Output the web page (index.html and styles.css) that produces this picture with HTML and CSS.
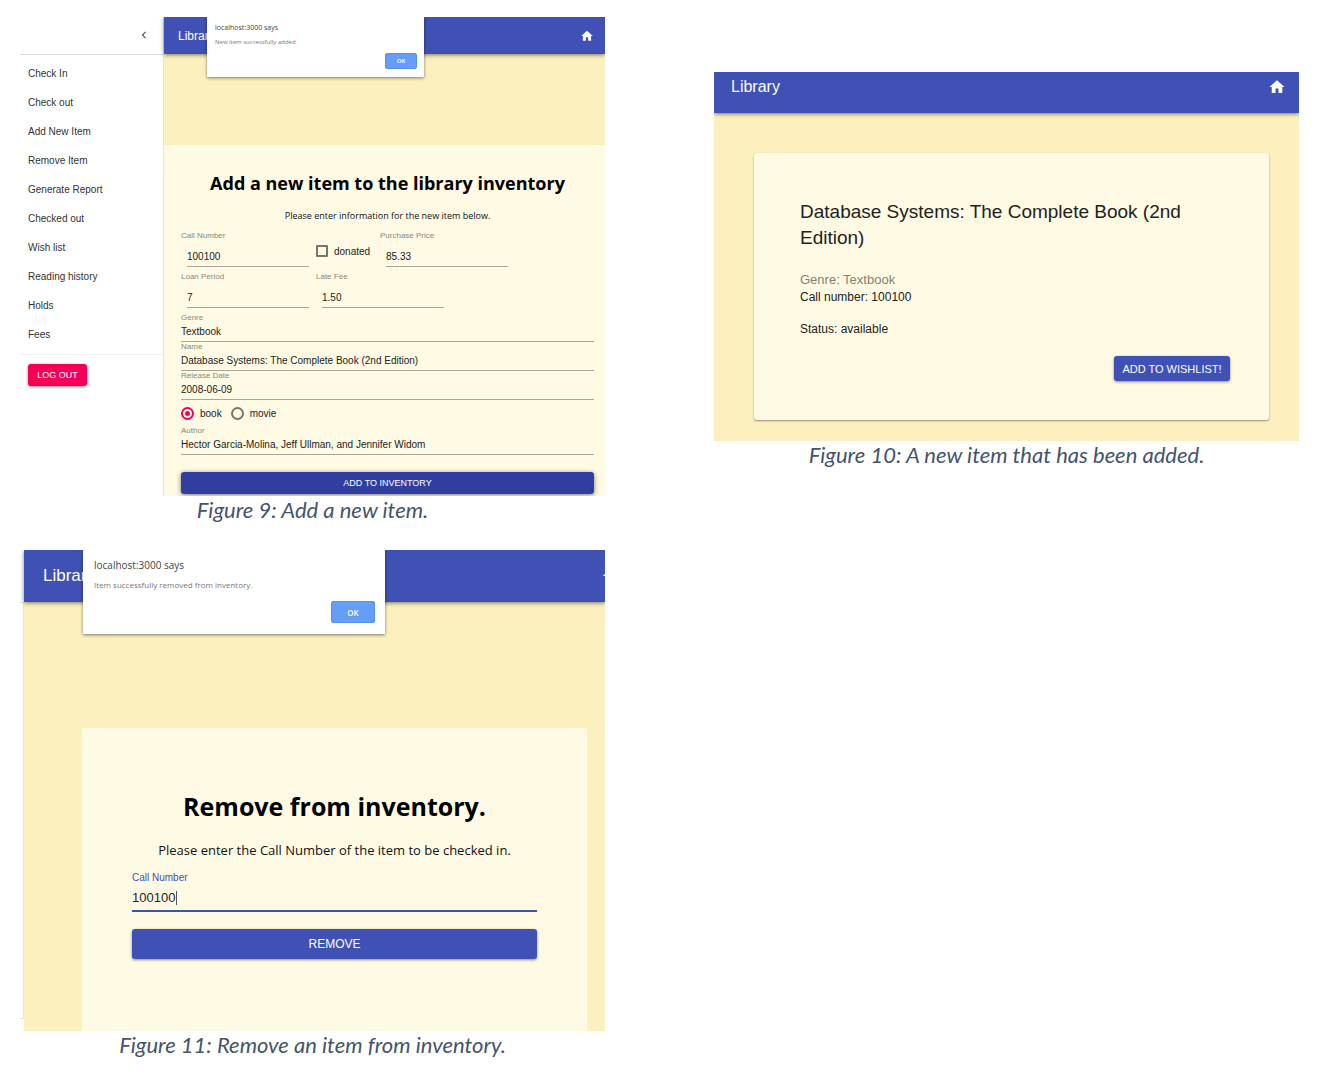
FILE: index.html
```html
<!DOCTYPE html>
<html lang="en">
<head>
<meta charset="utf-8">
<meta name="viewport" content="width=device-width, initial-scale=1">
<title>Library inventory figures</title>
<link rel="stylesheet" href="styles.css">
</head>
<body>
<svg class="sprite" aria-hidden="true">
  <symbol id="home" viewBox="0 0 24 24"><path d="M10 20v-6h4v6h5v-8h3L12 3 2 12h3v8z"/></symbol>
  <symbol id="chevron" viewBox="0 0 24 24"><path d="M15.41 7.41L14 6l-6 6 6 6 1.410-1.410L10.830 12z"/></symbol>
</svg>
<main class="figures">

  <figure class="figure">
    <div class="screen screen-add">
      <aside class="drawer">
        <div class="drawer-head">
          <button class="icon-button" type="button" aria-label="Close menu"><svg class="icon icon-small"><use href="#chevron"/></svg></button>
        </div>
        <nav>
          <ul class="menu">
            <li><a href="#">Check In</a></li>
            <li><a href="#">Check out</a></li>
            <li><a href="#">Add New Item</a></li>
            <li><a href="#">Remove Item</a></li>
            <li><a href="#">Generate Report</a></li>
            <li><a href="#">Checked out</a></li>
            <li><a href="#">Wish list</a></li>
            <li><a href="#">Reading history</a></li>
            <li><a href="#">Holds</a></li>
            <li><a href="#">Fees</a></li>
          </ul>
        </nav>
        <div class="drawer-foot"><button class="button button-logout" type="button">LOG OUT</button></div>
      </aside>
      <div class="app">
        <header class="bar">
          <span class="brand">Library</span>
          <a class="home" href="#" aria-label="Home"><svg class="icon icon-small"><use href="#home"/></svg></a>
        </header>
        <section class="panel">
          <h2 class="heading">Add a new item to the library inventory</h2>
          <p class="lead">Please enter information for the new item below.</p>
          <form class="form">
            <div class="row">
              <div class="field field-short"><label for="call">Call Number</label><input id="call" type="text" value="100100"></div>
              <label class="check"><input type="checkbox">donated</label>
              <div class="field field-short"><label for="price">Purchase Price</label><input id="price" type="text" value="85.33"></div>
            </div>
            <div class="row">
              <div class="field field-short"><label for="loan">Loan Period</label><input id="loan" type="text" value="7"></div>
              <div class="field field-short"><label for="fee">Late Fee</label><input id="fee" type="text" value="1.50"></div>
            </div>
            <div class="field"><label for="genre">Genre</label><input id="genre" type="text" value="Textbook"></div>
            <div class="field"><label for="name">Name</label><input id="name" type="text" value="Database Systems: The Complete Book (2nd Edition)"></div>
            <div class="field"><label for="date">Release Date</label><input id="date" type="text" value="2008-06-09"></div>
            <div class="radios">
              <label><input type="radio" name="kind" checked>book</label>
              <label><input type="radio" name="kind">movie</label>
            </div>
            <div class="field"><label for="author">Author</label><input id="author" type="text" value="Hector Garcia-Molina, Jeff Ullman, and Jennifer Widom"></div>
            <button class="button button-submit" type="button">ADD TO INVENTORY</button>
          </form>
        </section>
        <div class="alert" role="alertdialog" aria-label="localhost:3000 says">
          <p class="alert-title">localhost:3000 says</p>
          <p class="alert-text">New item successfully added</p>
          <button class="alert-ok" type="button">OK</button>
        </div>
      </div>
    </div>
    <figcaption>Figure 9: Add a new item.</figcaption>
  </figure>

  <figure class="figure">
    <div class="screen screen-detail">
      <div class="app">
        <header class="bar">
          <span class="brand">Library</span>
          <a class="home" href="#" aria-label="Home"><svg class="icon"><use href="#home"/></svg></a>
        </header>
        <article class="card">
          <h2 class="card-title">Database Systems: The Complete Book (2nd Edition)</h2>
          <p class="genre">Genre: Textbook</p>
          <p class="fact">Call number: 100100</p>
          <p class="fact fact-status">Status: available</p>
          <button class="button button-wish" type="button">ADD TO WISHLIST!</button>
        </article>
      </div>
    </div>
    <figcaption>Figure 10: A new item that has been added.</figcaption>
  </figure>

  <figure class="figure">
    <div class="screen screen-remove">
      <div class="drawer-edge"></div>
      <div class="app">
        <header class="bar">
          <span class="brand">Library</span>
          <a class="home" href="#" aria-label="Home"><svg class="icon"><use href="#home"/></svg></a>
        </header>
        <section class="panel">
          <h2 class="heading">Remove from inventory.</h2>
          <p class="lead">Please enter the Call Number of the item to be checked in.</p>
          <form class="form">
            <div class="field"><label for="remove">Call Number</label><input id="remove" type="text" value="100100"></div>
            <button class="button button-submit" type="button">REMOVE</button>
          </form>
        </section>
        <div class="alert" role="alertdialog" aria-label="localhost:3000 says">
          <p class="alert-title">localhost:3000 says</p>
          <p class="alert-text">Item successfully removed from inventory.</p>
          <button class="alert-ok" type="button">OK</button>
        </div>
      </div>
    </div>
    <figcaption>Figure 11: Remove an item from inventory.</figcaption>
  </figure>

</main>
</body>
</html>
```
FILE: styles.css
```css
* { box-sizing: border-box; }

:root {
  --indigo: #3f51b5;
  --indigo-dark: #303f9f;
  --pink: #f50057;
  --sand: #fbf0be;
  --cream: #fffae3;
  --sans: "Liberation Sans", Arial, sans-serif;
  --ui: "Open Sans", "Segoe UI", sans-serif;
}

body {
  margin: 0;
  background: #fff;
  color: #222;
  font-family: var(--sans);
}

h2, p, ul, figure { margin: 0; padding: 0; }
button, input { font: inherit; color: inherit; margin: 0; }
a { color: inherit; text-decoration: none; }
.sprite { display: none; }

.figures {
  display: grid;
  grid-template-columns: 1fr 1fr;
  align-items: center;
  gap: 26px 109px;
  padding: 17px 18px 13px 20px;
}

figcaption {
  font: italic 22px/28px Lato, Calibri, sans-serif;
  color: #44546a;
  text-align: center;
}

/* Shared application shell */
.screen { display: flex; overflow: hidden; }
.app {
  position: relative;
  flex: 1;
  min-width: 0;
  background: var(--sand);
}
.bar {
  display: flex;
  align-items: center;
  justify-content: space-between;
  background: var(--indigo);
  color: #fff;
  box-shadow: 0 1px 4px rgba(0, 0, 0, .5);
}
.home, .icon-button { display: flex; }
.icon { width: 18px; height: 18px; fill: currentColor; }
.icon-small { width: 14px; height: 14px; }
.icon-button { padding: 0; border: 0; background: none; color: #555; }
.panel { background: var(--cream); }
.heading {
  font-family: var(--ui);
  font-weight: 700;
  color: #000;
  text-align: center;
}
.lead { font-family: var(--ui); color: #111; text-align: center; }

.button {
  display: block;
  padding: 0;
  border: 0;
  border-radius: 3px;
  background: var(--indigo);
  color: #fff;
  box-shadow: 0 1px 3px rgba(0, 0, 0, .45);
}

.field { display: flex; flex-direction: column; }
.field input {
  width: 100%;
  padding: 0;
  border: 0;
  border-bottom: 1px solid #aaa798;
  border-radius: 0;
  background: none;
  outline: 0;
}

/* Browser message box */
.alert {
  position: absolute;
  top: 0;
  display: flex;
  flex-direction: column;
  background: #fff;
  font-family: var(--ui);
  box-shadow: 0 1px 3px rgba(0, 0, 0, .5);
}
.alert-title { color: #444; }
.alert-text { color: #777; }
.alert-ok {
  align-self: flex-end;
  margin-top: auto;
  padding: 0;
  border: 1px solid #5692f5;
  border-radius: 2px;
  background: #669df6;
  color: #fff;
  font-weight: 600;
}

/* Add item */
.drawer { width: 144px; border-right: 1px solid #e4e4e4; }
.drawer-head {
  display: flex;
  align-items: center;
  justify-content: flex-end;
  height: 38px;
  padding: 0 12px 2px 0;
  border-bottom: 1px solid #ddd;
}
.menu {
  padding: 4px 0 5px;
  border-bottom: 1px solid #f3f3f3;
  list-style: none;
  font-size: 10px;
  line-height: 29px;
  color: #333;
}
.menu a { display: block; padding-left: 8px; }
.drawer-foot { padding: 9px 8px; }
.button-logout { width: 59px; height: 22px; background: var(--pink); font-size: 9px; }

.screen-add .bar { height: 37px; padding: 0 11px 0 14px; font-size: 12px; }
.screen-add .panel { margin-top: 91px; padding: 25px 11px 2px 17px; }
.screen-add .heading { font-size: 18px; line-height: 26px; }
.screen-add .lead { margin-top: 13px; font-size: 9px; line-height: 14px; }
.screen-add .form { margin-top: 8px; font-size: 10px; }
.screen-add .row { display: flex; gap: 7px; margin-bottom: 5px; }
.screen-add .field label { font-size: 8px; line-height: 9px; color: #8a887c; }
.screen-add .field input { height: 20px; }
.screen-add .field-short { width: 128px; gap: 7px; padding-left: 6px; }
.screen-add .field-short label { margin-left: -6px; }
.check { display: flex; align-items: center; gap: 6px; width: 57px; height: 40px; margin-bottom: -4px; }
.radios { display: flex; align-items: center; gap: 9px; height: 26px; }
.radios label { display: flex; align-items: center; gap: 6px; }
.check input, .radios input {
  display: grid;
  place-items: center;
  flex: none;
  appearance: none;
  width: 12px;
  height: 12px;
  border: 2px solid #77756b;
  border-radius: 1px;
}
.radios input { width: 13px; height: 13px; border-radius: 50%; }
.radios input:checked { border-color: var(--pink); }
.radios input:checked::before {
  content: "";
  width: 5px;
  height: 5px;
  border-radius: 50%;
  background: var(--pink);
}
.screen-add .button-submit {
  width: 100%;
  height: 22px;
  margin-top: 17px;
  background: var(--indigo-dark);
  box-shadow: 0 1px 5px rgba(0, 0, 0, .5);
  font-size: 9px;
}
.screen-add .alert { left: 43px; width: 217px; height: 60px; padding: 6px 7px 8px 8px; }
.screen-add .alert-title { font-size: 7px; line-height: 10px; }
.screen-add .alert-text { margin-top: 4px; font-size: 6px; line-height: 10px; }
.screen-add .alert-ok { width: 32px; height: 16px; font-size: 6px; line-height: 12px; }

/* Item detail */
.screen-detail .bar { padding: 6px 13px 17px 17px; font-size: 16px; line-height: 18px; }
.card {
  display: flex;
  flex-direction: column;
  margin: 40px 30px 21px 40px;
  padding: 46px 39px 39px 46px;
  border-radius: 3px;
  background: var(--cream);
  box-shadow: 0 1px 2px rgba(0, 0, 0, .4);
}
.screen-detail .app { display: flow-root; }
.card-title { font-size: 19px; font-weight: 400; line-height: 26px; }
.genre { margin-top: 20px; font-size: 13px; line-height: 18px; color: #85826f; }
.fact { font-size: 12px; line-height: 16px; }
.fact-status { margin-top: 16px; }
.button-wish { align-self: flex-end; width: 116px; height: 25px; margin-top: 19px; font-size: 11px; }

/* Remove item */
.drawer-edge {
  width: 4px;
  margin: 52px 0 12px;
  border: solid #e4e4e4;
  border-width: 1px 1px 1px 0;
}
.screen-remove .bar { height: 52px; padding-left: 19px; font-size: 17px; }
.screen-remove .bar .icon { width: 20px; height: 20px; }
.screen-remove .home { margin-right: -16px; }
.screen-remove .panel { margin: 126px 18px 0 58px; padding: 60px 50px 72px; }
.screen-remove .heading { font-size: 25px; line-height: 36px; }
.screen-remove .lead { margin-top: 16px; font-size: 13px; line-height: 20px; }
.screen-remove .form { margin-top: 12px; }
.screen-remove .field label { font-size: 10px; line-height: 12px; color: var(--indigo); }
.screen-remove .field input {
  height: 28px;
  border-bottom: 2px solid var(--indigo);
  background: linear-gradient(#555, #555) 44px 7px / 1px 14px no-repeat;
  font-size: 13px;
}
.screen-remove .button-submit { width: 100%; height: 30px; margin-top: 17px; font-size: 12px; }
.screen-remove .alert { left: 59px; width: 302px; height: 84px; padding: 8px 10px 11px 11px; }
.screen-remove .alert-title { font-size: 10px; line-height: 14px; }
.screen-remove .alert-text { margin-top: 6px; font-size: 8px; line-height: 14px; }
.screen-remove .alert-ok { width: 44px; height: 22px; font-size: 8px; }
```
